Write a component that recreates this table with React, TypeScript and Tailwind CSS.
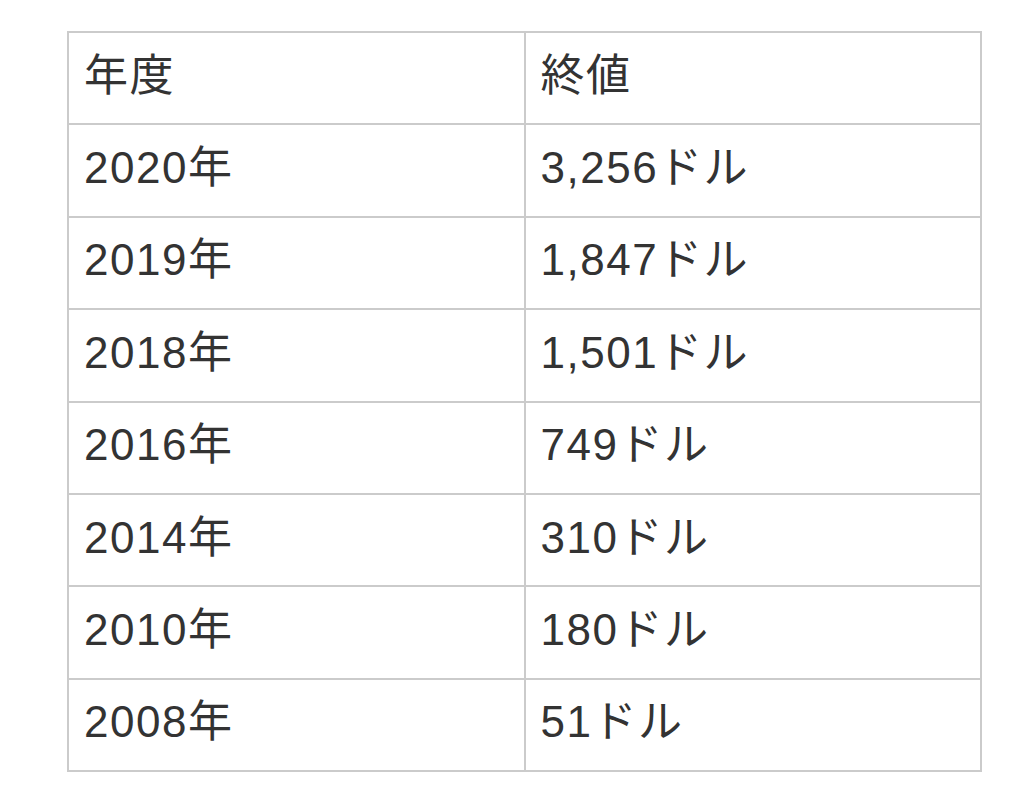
const rows: [string, string][] = [
  ["年度", "終値"],
  ["2020年", "3,256ドル"],
  ["2019年", "1,847ドル"],
  ["2018年", "1,501ドル"],
  ["2016年", "749ドル"],
  ["2014年", "310ドル"],
  ["2010年", "180ドル"],
  ["2008年", "51ドル"],
]

export default function App() {
  return (
    <div className="h-[806px] w-[1024px] bg-white pt-[31px] pl-[67px]">
      <table
        className="w-[915px] table-fixed border-collapse text-[44px] leading-none tracking-[1.5px] text-[#333333]"
        style={{ fontFamily: '"Liberation Sans", "Noto Sans CJK JP", sans-serif' }}
      >
        <tbody>
          {rows.map(([year, value]) => (
            <tr key={year} className="h-[92.4px]">
              <td className="border-2 border-[#cbcbcb] px-[15px] pb-[5px] align-middle">
                {year}
              </td>
              <td className="border-2 border-[#cbcbcb] px-[15px] pb-[5px] align-middle">
                {value}
              </td>
            </tr>
          ))}
        </tbody>
      </table>
    </div>
  )
}
